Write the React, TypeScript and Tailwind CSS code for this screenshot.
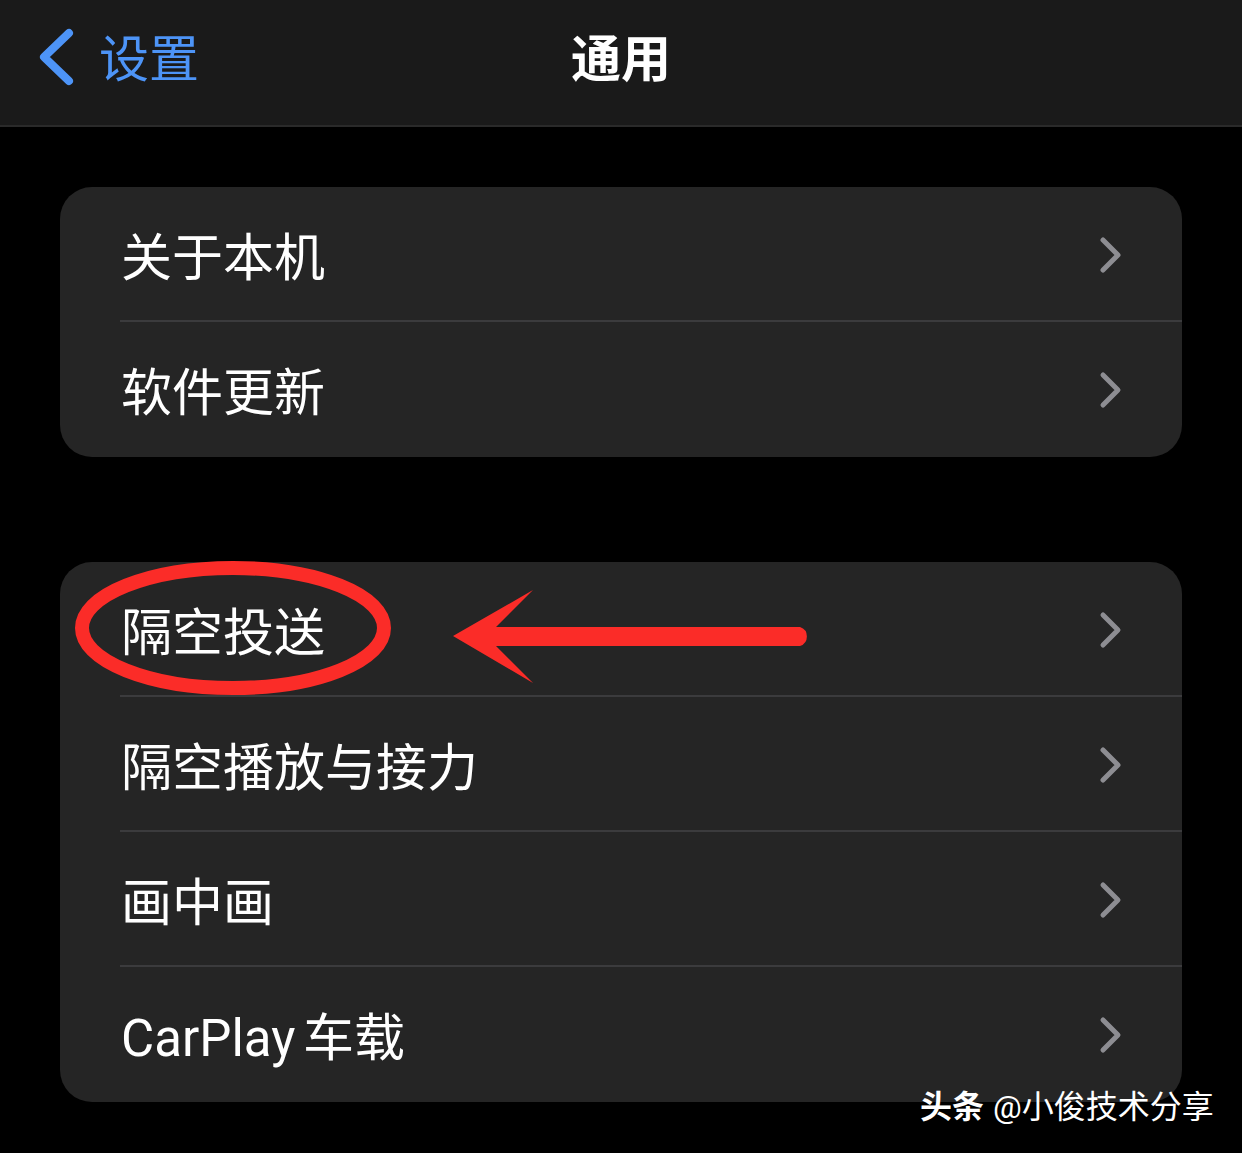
import React from "react";

const font = { fontFamily: 'Roboto, "Noto Sans CJK SC", "Noto Sans", sans-serif' };

function Chevron() {
  return (
    <svg width="26" height="40" viewBox="0 0 26 40" className="shrink-0">
      <path
        d="M5 5 L20 20 L5 35"
        fill="none"
        stroke="#8d8d92"
        strokeWidth="5"
        strokeLinecap="round"
        strokeLinejoin="round"
      />
    </svg>
  );
}

function Row({ label, last }: { label: string; last?: boolean }) {
  return (
    <div className="relative flex h-[135px] items-center pl-[61px] pr-[58px]">
      <span className="flex-1 pt-[7px] text-[51px] leading-none text-white [word-spacing:-5px]">
        {label}
      </span>
      <Chevron />
      {!last && (
        <div className="absolute bottom-0 left-[60px] right-0 h-[2px] bg-[#3b3b3d]" />
      )}
    </div>
  );
}

function Group({ items }: { items: string[] }) {
  return (
    <div className="mx-[60px] overflow-hidden rounded-[32px] bg-[#252525]">
      {items.map((it, i) => (
        <Row key={it} label={it} last={i === items.length - 1} />
      ))}
    </div>
  );
}

export default function App() {
  return (
    <div className="relative h-[1153px] w-[1242px] overflow-hidden bg-black" style={font}>
      {/* nav bar */}
      <div className="relative flex h-[127px] items-center border-b-2 border-[#2a2a2a] bg-[#1a1a1a] pb-[6px]">
        <div className="flex items-center pl-[38px]">
          <svg width="40" height="58" viewBox="0 0 40 58" className="-translate-y-[3px]">
            <path
              d="M31 5 L6 29 L31 53"
              fill="none"
              stroke="#4d94f7"
              strokeWidth="8"
              strokeLinecap="round"
              strokeLinejoin="round"
            />
          </svg>
          <span className="ml-[21px] text-[50px] leading-none text-[#4d94f7]">设置</span>
        </div>
        <span className="absolute left-1/2 -translate-x-1/2 text-[50px] font-semibold leading-none text-white">
          通用
        </span>
      </div>

      <div className="pt-[60px]">
        <Group items={["关于本机", "软件更新"]} />
      </div>
      <div className="pt-[105px]">
        <Group items={["隔空投送", "隔空播放与接力", "画中画", "CarPlay 车载"]} />
      </div>

      {/* red annotation */}
      <svg
        className="pointer-events-none absolute left-0 top-0"
        width="1242"
        height="1153"
        viewBox="0 0 1242 1153"
      >
        <ellipse cx="233" cy="628" rx="151" ry="60" fill="none" stroke="#fb2c28" strokeWidth="14" />
        <path d="M496 627 L800 627 A10 10 0 0 1 800 646 L496 646 L533 683 L453 636 L533 590 Z" fill="#fb2c28" />
      </svg>

      {/* watermark */}
      <div className="absolute left-[920px] top-[1091px] flex items-center text-[32px] leading-none text-white">
        <span className="font-bold">头条</span>
        <span className="ml-[9px]">@小俊技术分享</span>
      </div>
    </div>
  );
}
